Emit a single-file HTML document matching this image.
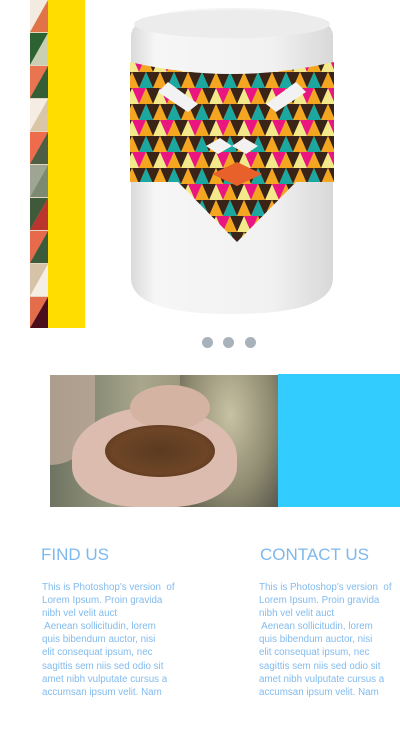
<!DOCTYPE html>
<html><head><meta charset="utf-8"><style>
html,body{margin:0;padding:0;background:#fff;width:400px;height:755px;overflow:hidden;position:relative;font-family:"Liberation Sans",sans-serif}
.a{position:absolute}
.h{color:#7fb8ec;font-size:17px;letter-spacing:0px;font-weight:normal}
.p{color:#82bbee;font-size:9.8px;line-height:13.1px;white-space:pre}
.dot{width:11px;height:11px;border-radius:50%;background:#a9b1ba;top:337px}
</style></head><body>
<svg class="a" style="left:30px;top:0" width="18" height="328" viewBox="0 0 18 328">
<rect width="18" height="328" fill="#e2d6c0"/>
<polygon points="0,0 18,0 0,32" fill="#f3ebe0"/><polygon points="18,0 18,32 0,32" fill="#e07448"/>
<polygon points="0,33 18,33 0,65" fill="#2d6232"/><polygon points="18,33 18,65 0,65" fill="#c9cfb3"/>
<polygon points="0,66 18,66 0,98" fill="#e87450"/><polygon points="18,66 18,98 0,98" fill="#355e37"/>
<polygon points="0,99 18,99 0,131" fill="#f5ede3"/><polygon points="18,99 18,131 0,131" fill="#d9c5a8"/>
<polygon points="0,132 18,132 0,164" fill="#ee6c4c"/><polygon points="18,132 18,164 0,164" fill="#4d5e45"/>
<polygon points="0,165 18,165 0,197" fill="#9ea592"/><polygon points="18,165 18,197 0,197" fill="#7d8a72"/>
<polygon points="0,198 18,198 0,230" fill="#3f5a3a"/><polygon points="18,198 18,230 0,230" fill="#b9352d"/>
<polygon points="0,231 18,231 0,263" fill="#e86a4c"/><polygon points="18,231 18,263 0,263" fill="#3d5a3a"/>
<polygon points="0,264 18,264 0,296" fill="#d6c2a6"/><polygon points="18,264 18,296 0,296" fill="#f5eee4"/>
<polygon points="0,297 18,297 0,328" fill="#e46e4c"/><polygon points="18,297 18,328 0,328" fill="#4a0e1c"/>
</svg>
<div class="a" style="left:48px;top:0;width:37px;height:328px;background:#ffdd00"></div>
<svg class="a" style="left:128px;top:6px" width="208" height="312" viewBox="0 0 208 312">
<defs>
<linearGradient id="g" x1="0" x2="1"><stop offset="0" stop-color="#dadada"/><stop offset=".12" stop-color="#f6f6f6"/><stop offset=".7" stop-color="#f1f1f1"/><stop offset="1" stop-color="#d8d8d8"/></linearGradient>
<pattern id="t" x="4" y="2" width="28" height="32" patternUnits="userSpaceOnUse">
<rect width="28" height="32" fill="#f3e98a"/>
<polygon points="0,0 14,0 7,16" fill="#3a2418"/>
<polygon points="14,0 28,0 21,16" fill="#3a2418"/>
<polygon points="7,16 21,16 14,0" fill="#1aa8a0"/>
<polygon points="21,16 28,16 28,0" fill="#f4a620"/>
<polygon points="0,16 0,0 7,16" fill="#f4a620"/>
<polygon points="0,16 14,16 7,32" fill="#e9167f"/>
<polygon points="14,16 28,16 21,32" fill="#3a2418"/>
<polygon points="7,32 21,32 14,16" fill="#f4a620"/>
</pattern>
</defs>
<path d="M3,30 Q3,2 104,2 Q205,2 205,30 L205,272 Q205,308 104,308 Q3,308 3,272 Z" fill="url(#g)"/>
<ellipse cx="104" cy="18" rx="98" ry="14" fill="#ececec"/>
<path d="M2,56 Q104,80 206,56 L206,176 L168,176 L109,236 L50,176 L2,176 Z" fill="url(#t)"/>
<path d="M30,86 L60,106 L70,98 L40,76 Z M178,86 L148,106 L138,98 L168,76 Z" fill="#f2f2f2"/>
<path d="M78,140 L92,132 L104,140 L90,148 Z M130,140 L116,132 L104,140 L118,148 Z" fill="#f2f2f2"/>
<path d="M84,168 L109,156 L134,168 L109,180 Z" fill="#e8602a"/>
</svg>
<div class="a dot" style="left:202px"></div>
<div class="a dot" style="left:223px"></div>
<div class="a dot" style="left:245px"></div>
<div class="a" style="left:50px;top:375px;width:228px;height:132px;overflow:hidden;background:linear-gradient(90deg,#6e7462,#a8a68c 40%,#8f8a6e 75%,#5a5c4c)">
<div class="a" style="left:130px;top:0;width:100px;height:132px;background:radial-gradient(ellipse at 50% 30%,#c8c2a4,#8e8a70 60%,#55554a)"></div>
<div class="a" style="left:0;top:0;width:45px;height:90px;background:#bca898;opacity:.8;border-radius:0 0 45px 0"></div>
<div class="a" style="left:22px;top:32px;width:165px;height:100px;border-radius:50% 50% 40% 40%;background:#dcbcae"></div>
<div class="a" style="left:80px;top:10px;width:80px;height:45px;border-radius:50%;background:#d4b3a2"></div>
<div class="a" style="left:55px;top:50px;width:110px;height:52px;border-radius:50%;background:radial-gradient(ellipse,#5a3a20,#6e4526 60%,#4a2e18)"></div>
</div>
<div class="a" style="left:278px;top:374px;width:122px;height:133px;background:#33ccff"></div>
<div class="a h" style="left:41px;top:545px">FIND US</div>
<div class="a h" style="left:260px;top:545px">CONTACT US</div>
<div class="a p" style="left:42px;top:581px">This is Photoshop's version  of
Lorem Ipsum. Proin gravida
nibh vel velit auct
 Aenean sollicitudin, lorem
quis bibendum auctor, nisi
elit consequat ipsum, nec
sagittis sem niis sed odio sit
amet nibh vulputate cursus a
accumsan ipsum velit. Nam</div>
<div class="a p" style="left:259px;top:581px">This is Photoshop's version  of
Lorem Ipsum. Proin gravida
nibh vel velit auct
 Aenean sollicitudin, lorem
quis bibendum auctor, nisi
elit consequat ipsum, nec
sagittis sem niis sed odio sit
amet nibh vulputate cursus a
accumsan ipsum velit. Nam</div>
</body></html>
